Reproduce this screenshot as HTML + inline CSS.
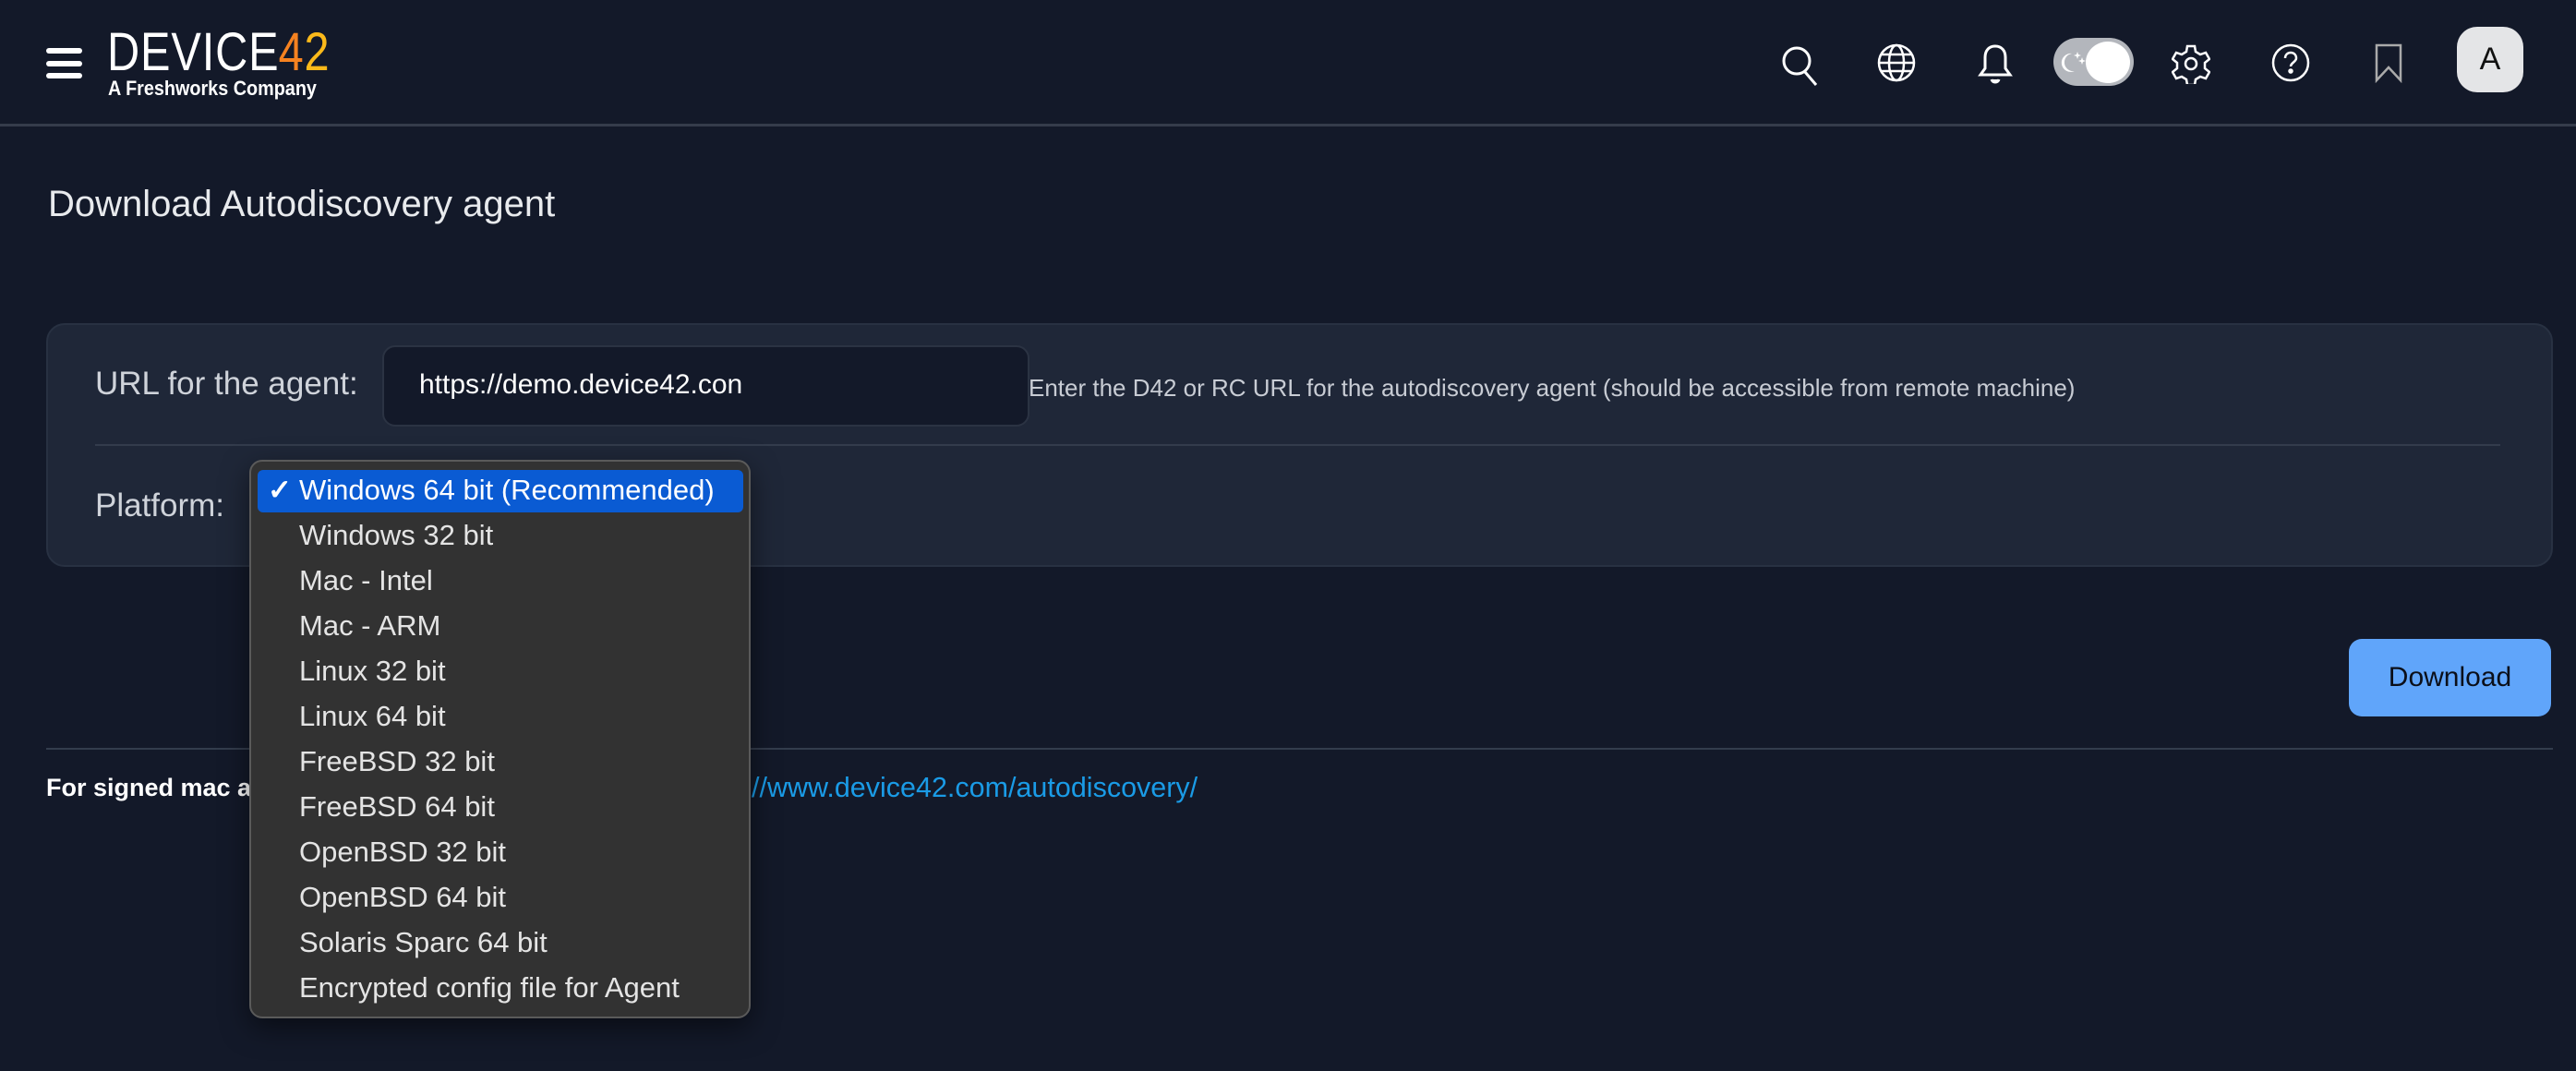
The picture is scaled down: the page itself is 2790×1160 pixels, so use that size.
<!DOCTYPE html>
<html><head><meta charset="utf-8"><style>
*{margin:0;padding:0;box-sizing:border-box}
body{width:2790px;height:1160px;background:#131929;font-family:"Liberation Sans",sans-serif;position:relative;overflow:hidden;color:#fff}
.a{position:absolute;white-space:nowrap}
.hdr{position:absolute;left:0;top:0;width:2790px;height:137px;border-bottom:3px solid #353c4b}
svg{position:absolute}
.card{position:absolute;left:50px;top:350px;width:2715px;height:264px;background:#1f2738;border:2px solid #283142;border-radius:20px}
.dd{position:absolute;left:270px;top:498px;width:543px;height:605px;background:#323232;border:2px solid #5a5a5a;border-radius:14px;box-shadow:0 10px 30px rgba(0,0,0,.5)}
.it{position:absolute;left:52px;font-size:31px;color:#e4e4e4}
</style></head><body>
<div class="hdr"></div>
<div class="a" style="left:50px;top:52px;width:39px;height:6px;background:#fff;border-radius:3px"></div>
<div class="a" style="left:50px;top:66px;width:39px;height:6px;background:#fff;border-radius:3px"></div>
<div class="a" style="left:50px;top:79px;width:39px;height:6px;background:#fff;border-radius:3px"></div>
<div class="a" style="left:116px;top:28px;font-size:58px;line-height:58px;letter-spacing:1px;transform:scale(.84,1);transform-origin:left top">DEVIC<span style="letter-spacing:0">E</span><span style="color:#f58220">4</span><span style="color:#fbb91a">2</span></div>
<div class="a" style="left:117px;top:83px;font-size:22px;font-weight:bold;transform:scaleX(.9);transform-origin:left">A Freshworks Company</div>
<svg style="left:1928px;top:47px" width="46" height="46" viewBox="0 0 46 46" fill="none" stroke="#fff" stroke-width="3"><circle cx="18" cy="19" r="14"/><path d="M27 31l12 14"/></svg>
<svg style="left:2032px;top:46px" width="44" height="44" viewBox="0 0 44 44" fill="none" stroke="#fff" stroke-width="2.5"><circle cx="22" cy="22" r="19"/><ellipse cx="22" cy="22" rx="8" ry="19"/><path d="M3 22h38M6 13h32M6 31h32"/></svg>
<svg style="left:2142px;top:46px" width="38" height="48" viewBox="0 0 38 48" fill="none" stroke="#fff" stroke-width="3"><path d="M19 4c-7 0-11 5-11 12v12l-5 7h32l-5-7V16c0-7-4-12-11-12z"/><path d="M15 40c1 4 7 4 8 0" fill="#fff"/></svg>
<div class="a" style="left:2224px;top:41px;width:87px;height:52px;background:#b3b6bc;border-radius:26px"></div>
<div class="a" style="left:2259px;top:45px;width:48px;height:45px;background:#fff;border-radius:50%"></div>
<svg style="left:2230px;top:50px" width="32" height="34" viewBox="0 0 32 34"><path d="M14 8a10 10 0 1 0 3 19a9 9 0 0 1 -3 -19z" fill="#fff"/><path d="M20 6l1 3 3 1-3 1-1 3-1-3-3-1 3-1z M25 12l1 3 3 1-3 1-1 3-1-3-3-1 3-1z" fill="#fff"/></svg>
<svg style="left:2352px;top:47px" width="42" height="44" viewBox="0 0 42 44" fill="none" stroke="#fff" stroke-width="2.5"><path d="M17 3h8l1 6 5 3 6-2 4 7-5 4v6l5 4-4 7-6-2-5 3-1 6h-8l-1-6-5-3-6 2-4-7 5-4v-6l-5-4 4-7 6 2 5-3z"/><circle cx="21" cy="22" r="6"/></svg>
<svg style="left:2459px;top:46px" width="44" height="44" viewBox="0 0 44 44" fill="none" stroke="#fff" stroke-width="2.5"><circle cx="22" cy="22" r="19"/><path d="M16 17c0-4 3-6 6-6s6 2 6 6-6 5-6 9"/><circle cx="22" cy="31" r="1.5" fill="#fff"/></svg>
<svg style="left:2570px;top:46px" width="34" height="44" viewBox="0 0 34 44" fill="none" stroke="#aaa" stroke-width="2.5"><path d="M4 3h26v38l-13-14-13 14z"/></svg>
<div class="a" style="left:2661px;top:29px;width:72px;height:71px;background:#e4e5e7;border-radius:22px;color:#111;font-size:34px;text-align:center;line-height:71px">A</div>
<div class="a" style="left:52px;top:199px;font-size:40px;color:#e8eaed">Download Autodiscovery agent</div>
<div class="card"></div>
<div class="a" style="left:103px;top:396px;font-size:35px;color:#cfd3da">URL for the agent:</div>
<div class="a" style="left:414px;top:374px;width:701px;height:88px;background:#131929;border:2px solid #2b3343;border-radius:14px"></div>
<div class="a" style="left:454px;top:400px;font-size:30px;color:#fff">https://demo.device42.con</div>
<div class="a" style="left:1114px;top:405px;font-size:26px;color:#c8ccd4">Enter the D42 or RC URL for the autodiscovery agent (should be accessible from remote machine)</div>
<div class="a" style="left:103px;top:481px;width:2605px;height:2px;background:#333c4c"></div>
<div class="a" style="left:103px;top:528px;font-size:35px;color:#cfd3da">Platform:</div>
<div class="a" style="left:2544px;top:692px;width:219px;height:84px;background:#60a5fa;border-radius:14px;color:#0b0f19;font-size:30px;text-align:center;line-height:84px">Download</div>
<div class="a" style="left:50px;top:810px;width:2715px;height:2px;background:#333c4c"></div>
<div class="a" style="left:50px;top:838px;font-size:27px;font-weight:bold;color:#fff">For signed mac and windows agents, please visit https:</div>
<div class="a" style="left:814px;top:836px;font-size:30.5px;color:#1a9be6">//www.device42.com/autodiscovery/</div>
<div class="dd">
<div class="a" style="left:7px;top:9px;width:526px;height:46px;background:#0a5bd3;border-radius:6px"></div>
<div class="it" style="left:18px;top:13px;color:#fff;font-weight:bold">✓</div>
<div class="it" style="top:13px;color:#fff">Windows 64 bit (Recommended)</div>
<div class="it" style="top:62px">Windows 32 bit</div>
<div class="it" style="top:111px">Mac - Intel</div>
<div class="it" style="top:160px">Mac - ARM</div>
<div class="it" style="top:209px">Linux 32 bit</div>
<div class="it" style="top:258px">Linux 64 bit</div>
<div class="it" style="top:307px">FreeBSD 32 bit</div>
<div class="it" style="top:356px">FreeBSD 64 bit</div>
<div class="it" style="top:405px">OpenBSD 32 bit</div>
<div class="it" style="top:454px">OpenBSD 64 bit</div>
<div class="it" style="top:503px">Solaris Sparc 64 bit</div>
<div class="it" style="top:552px">Encrypted config file for Agent</div>
</div>
</body></html>
